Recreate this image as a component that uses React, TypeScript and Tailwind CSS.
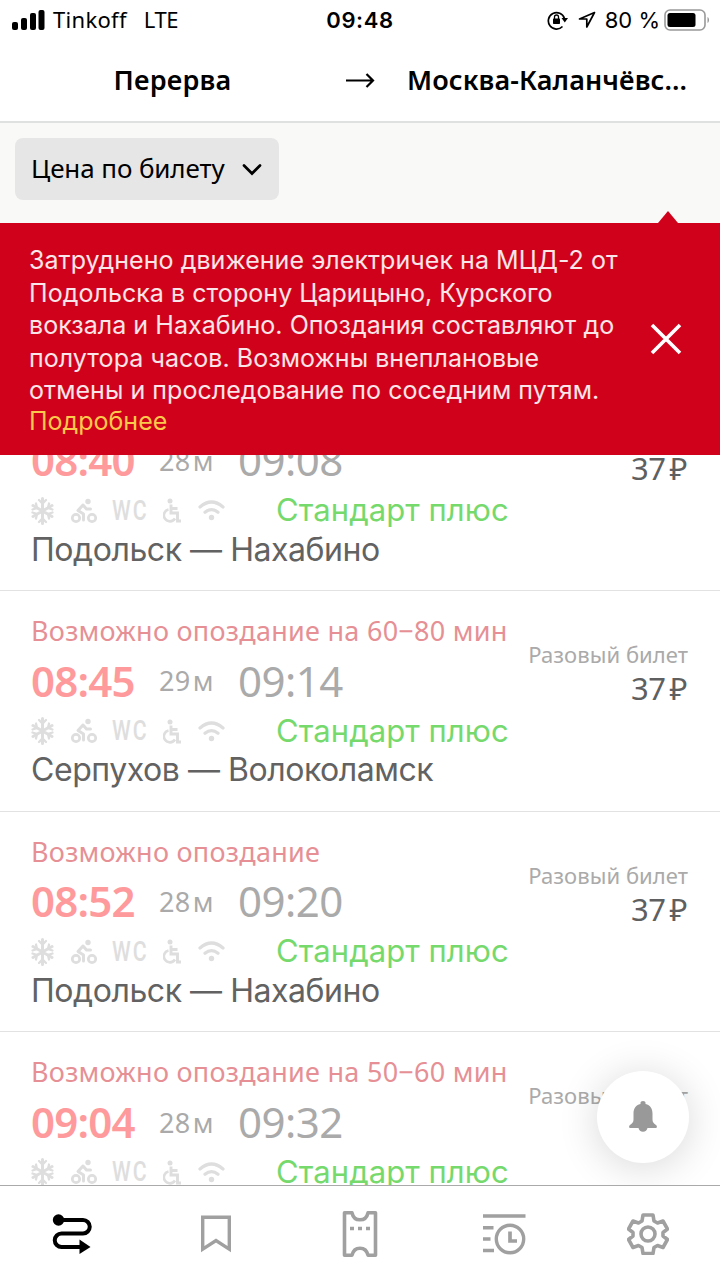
import React from "react";

interface Train {
  warning: string;
  departure: string;
  duration: string;
  arrival: string;
  route: string;
}

const trains: Train[] = [
  { warning: "Возможно опоздание", departure: "08:40", duration: "28", arrival: "09:08", route: "Подольск — Нахабино" },
  { warning: "Возможно опоздание на 60−80 мин", departure: "08:45", duration: "29", arrival: "09:14", route: "Серпухов — Волоколамск" },
  { warning: "Возможно опоздание", departure: "08:52", duration: "28", arrival: "09:20", route: "Подольск — Нахабино" },
  { warning: "Возможно опоздание на 50−60 мин", departure: "09:04", duration: "28", arrival: "09:32", route: "Подольск — Нахабино" },
];

const alertLines = [
  "Затруднено движение электричек на МЦД-2 от",
  "Подольска в сторону Царицыно, Курского",
  "вокзала и Нахабино. Опоздания составляют до",
  "полутора часов. Возможны внеплановые",
  "отмены и проследование по соседним путям.",
];

function StatusBar() {
  return (
    <div className="flex h-10 items-center px-3 font-['Inter',sans-serif] text-[22px] text-black">
      <div className="flex flex-1 items-center">
        <svg width="33" height="20" viewBox="0 0 33 20" className="mr-2">
          <rect x="0" y="12" width="6" height="8" rx="2" />
          <rect x="9" y="8" width="6" height="12" rx="2" />
          <rect x="18" y="3" width="6" height="17" rx="2" />
          <rect x="26.500" y="0" width="6" height="20" rx="2" />
        </svg>
        <span className="pb-0.5 font-['Noto_Sans',sans-serif] tracking-[0.3px]">Tinkoff</span>
        <span className="ml-[17px] pb-0.5 font-['Noto_Sans',sans-serif] tracking-[-0.4px]">LTE</span>
      </div>
      <span className="text-[22px] font-semibold tracking-[0.6px]">09:48</span>
      <div className="-mr-[3px] flex flex-1 items-center justify-end pl-[3px]">
        <svg width="22" height="20" viewBox="0 0 22 20" className="mr-[9px]">
          <path d="M15.500 16.500A8.200 8.200 0 1 1 17.400 8.500" fill="none" stroke="black" strokeWidth="1.700" />
          <path d="M14.500 8h6.500l-3.200 4.500z" />
          <rect x="6" y="8.500" width="7" height="5.500" rx="0.700" />
          <path d="M7.500 9V7a2 2 0 0 1 4 0v2" fill="none" stroke="black" strokeWidth="1.300" />
        </svg>
        <svg width="18" height="18" viewBox="0 0 18 18" className="mr-[9px]" fill="none" stroke="black" strokeWidth="1.700" strokeLinejoin="round">
          <path d="M16.500 1.500L1.500 8h7.300v8z" />
        </svg>
        <span className="font-['Inter',sans-serif]">80 %</span>
        <svg width="47" height="22" viewBox="0 0 47 22" className="ml-1">
          <rect x="1" y="1" width="40" height="20" rx="5" fill="none" stroke="#999" strokeWidth="1.600" />
          <rect x="3.500" y="4" width="28" height="14" rx="2.500" />
          <path d="M43.500 8c2 1 2 5 0 6z" fill="#999" />
        </svg>
      </div>
    </div>
  );
}

function Header() {
  return (
    <header className="flex h-[83px] items-center border-b-2 border-[#dfe1e1] font-['Noto_Sans',sans-serif] text-[27px] font-semibold text-black">
      <div className="flex w-[345px] justify-center pb-px">
        <span className="tracking-[0.2px]">Перерва</span>
      </div>
      <svg width="30" height="16" viewBox="0 0 30 16" fill="none" stroke="black" strokeWidth="2.200">
        <path d="M1 7.500h27M21.500 1l6.500 6.500-6.500 6.500" />
      </svg>
      <span className="ml-8 pb-px tracking-[0.100px]">Москва-Каланчёвс...</span>
    </header>
  );
}

function ServiceAlert() {
  return (
    <section className="relative z-10 flex h-[232px] items-center bg-[#d0021b] pl-[29px] font-['Inter',sans-serif] text-[25px] text-white/90">
      <span className="absolute -top-3 left-[658px] border-x-10 border-b-12 border-x-transparent border-b-[#d0021b]" />
      <div className="w-[621px] pt-px">
        {alertLines.map((line) => (
          <p key={line} className="h-[32.6px] leading-[32.6px] tracking-[0.050px] whitespace-nowrap">
            {line}
          </p>
        ))}
        <p className="h-7 leading-7 text-[#fbc94b]">Подробнее</p>
      </div>
      <svg width="32" height="32" viewBox="0 0 32 32" fill="none" stroke="white" strokeWidth="3.600">
        <path d="M2 2l28 28M30 2L2 30" />
      </svg>
    </section>
  );
}

function Amenities() {
  return (
    <div className="flex w-[245px] items-center text-[#dedede]">
      <svg width="23" height="28" viewBox="0 0 22 28" fill="none" stroke="currentColor" strokeWidth="3" strokeLinecap="round">
        <path d="M11 1.500v25M1.500 8.500l19 11M20.500 8.500l-19 11" />
        <path d="M7.500 3l3.500 3.500L14.500 3M7.500 25l3.500-3.500 3.500 3.500M1 12.500l4.500-1.500-1-4.500M21 15.500L16.500 17l1 4.500M1 15.500L5.500 17l-1 4.500M21 12.500L16.500 11l1-4.500" strokeWidth="2.300" />
      </svg>
      <svg width="26" height="26" viewBox="0 0 26 26" fill="none" stroke="currentColor" className="ml-[17px]">
        <circle cx="5" cy="20" r="3.700" strokeWidth="2.700" />
        <circle cx="21" cy="20" r="3.700" strokeWidth="2.700" />
        <circle cx="17" cy="3.500" r="2.700" fill="currentColor" stroke="none" />
        <path d="M19.500 11h-4l-3.500-4-5 5.500 5.500 3.500v6" strokeWidth="3" strokeLinejoin="round" strokeLinecap="round" />
      </svg>
      <span className="ml-[15px] w-[37px] font-['Roboto',sans-serif] text-[28px] leading-7 font-medium">
        <span className="inline-block origin-left scale-x-[0.76] tracking-[2.500px]">WC</span>
      </span>
      <svg width="20" height="25" viewBox="0 0 20 25" fill="none" stroke="currentColor" strokeWidth="2.900" className="ml-[14px]">
        <circle cx="7" cy="3" r="2.500" fill="currentColor" stroke="none" />
        <path d="M8 6.500v8.500h6.500v8h3.500M8 10.500h6.500" />
        <path d="M5.500 11.500a6 6 0 1 0 6.500 9" strokeWidth="2.600" />
      </svg>
      <svg width="27" height="21" viewBox="0 0 27 21" fill="none" stroke="currentColor" strokeWidth="3.200" strokeLinecap="round" className="ml-[15px]">
        <path d="M2 7q11.500-10 23 0M7 12.300q6.500-5.500 13 0" />
        <circle cx="13.500" cy="17.500" r="2.700" fill="currentColor" stroke="none" />
      </svg>
    </div>
  );
}

function TrainRow({ train }: { train: Train }) {
  return (
    <li className="flex h-[220.600px] shrink-0 justify-between border-b border-[#e2e2e2] pl-[31px] pr-8 pt-[22px] whitespace-nowrap">
      <div className="flex flex-col">
        <p className="h-9 font-['Noto_Sans',sans-serif] text-[27px] leading-9 tracking-[0.270px] text-[#e69095]">{train.warning}</p>
        <div className="flex h-16 items-center pb-0.5 font-['Noto_Sans',sans-serif] text-[#aaa]">
          <span className="w-[128px] text-[42px] font-semibold tracking-[-0.800px] text-[#ff9a9c]">{train.departure}</span>
          <span className="w-[79px] pt-[3px] text-[27px] tracking-[0.400px]">
            {train.duration}
            <span className="ml-0.5">м</span>
          </span>
          <span className="text-[42px] tracking-[-0.500px]">{train.arrival}</span>
        </div>
        <div className="flex h-9 items-center">
          <Amenities />
          <span className="font-['Inter',sans-serif] text-[31px] tracking-[0.080px] text-[#75d96c]">Стандарт плюс</span>
        </div>
        <p className="h-[42px] font-['Inter',sans-serif] text-[32px] leading-[42px] tracking-[-0.450px] text-[#626262]">{train.route}</p>
      </div>
      <div className="flex flex-col items-end pt-[25px] font-['Noto_Sans',sans-serif]">
        <span className="h-8 text-[22px] leading-8 tracking-[0.050px] text-[#aaa]">Разовый билет</span>
        <span className="flex h-9 gap-[4px] pr-0.5 text-[31px] leading-9 tracking-[-0.500px] text-[#5f5f5f]">
          37<span className="-mr-px">₽</span>
        </span>
      </div>
    </li>
  );
}

function TabBar() {
  return (
    <nav className="relative z-10 grid h-[95px] shrink-0 grid-cols-5 items-center justify-items-center border-t border-[#aaa] bg-white pt-0.5 text-[#a0a0a0]">
      <svg width="40" height="40" viewBox="0 0 40 40" fill="none" stroke="black" strokeWidth="4">
        <circle cx="6.500" cy="6" r="5.700" fill="black" stroke="none" />
        <path d="M6 6h25a6.700 6.700 0 0 1 0 13.500H9.500a6.700 6.700 0 0 0 0 13.500h19" />
        <path d="M27.500 25.500l11 7.500-11 7z" fill="black" stroke="none" />
      </svg>
      <svg width="32" height="38" viewBox="0 0 32 38" fill="none" stroke="currentColor" strokeWidth="3.400">
        <path d="M2.700 2.200h26.600v32L16 25.500 2.700 34.200z" />
      </svg>
      <svg width="36" height="46" viewBox="0 0 36 46" fill="none" stroke="currentColor" strokeWidth="3.600" strokeLinejoin="round">
        <path d="M2.500 1.800h7.500c1 4.500 4 7 8 7s7-2.500 8-7h7.500v42.400H26c-1-4.500-4-7-8-7s-7 2.500-8 7H2.500z" />
        <path d="M8 17.500h4M16 17.500h4M24 17.500h4" strokeWidth="3.700" />
      </svg>
      <svg width="43" height="41" viewBox="0 0 43 41" fill="none" stroke="currentColor" strokeWidth="3.400">
        <path d="M0 2h42.500M0 13.700h10.500M0 25h7.500M0 36.500h11" />
        <circle cx="27" cy="25" r="13.700" />
        <path d="M27 17.500v9.500h7" strokeWidth="3.700" />
      </svg>
      <svg width="42" height="42" viewBox="0 0 42 42" fill="none" stroke="currentColor" strokeWidth="3.600" strokeLinejoin="round" className="mr-px">
        <path d="M16 2h10l1 6 3.500 2 5.500-2 4.500 8-4.500 3.500v3.500l4.500 3.500-4.500 8-5.500-2-3.500 2-1 6H16l-1-6-3.500-2-5.500 2-4.500-8L6 23v-3.500L1.500 16 6 8l5.500 2L15 8z" />
        <circle cx="21" cy="21" r="7" />
      </svg>
    </nav>
  );
}

export default function App() {
  return (
    <div className="relative flex h-[1280px] w-[720px] flex-col overflow-hidden bg-white">
      <StatusBar />
      <Header />
      <div className="flex h-[100px] shrink-0 items-start bg-[#f9f9f8] pl-[15px] pt-[15px]">
        <button className="flex h-[62px] w-[264px] items-center justify-between rounded-lg bg-[#e6e6e6] px-4 font-['Noto_Sans',sans-serif] text-[26px] text-black">
          <span className="pb-px tracking-[-0.100px] whitespace-nowrap">Цена по билету</span>
          <svg width="22" height="14" viewBox="0 0 22 14" fill="none" stroke="black" strokeWidth="2.700" strokeLinecap="round">
            <path d="M3 3.500l8 8 8-8" />
          </svg>
        </button>
      </div>
      <ServiceAlert />
      <ul className="-mt-[84.500px] flex min-h-0 flex-1 flex-col overflow-hidden">
        {trains.map((train) => (
          <TrainRow key={train.departure} train={train} />
        ))}
      </ul>
      <button className="absolute left-[597px] top-[1071px] flex size-[92px] items-center justify-center rounded-full bg-white shadow-[0_4px_40px_rgba(0,0,0,0.16)]">
        <svg width="28" height="32" viewBox="0 0 28 32" fill="#999">
          <path d="M11.500 3V1.500Q11.500 0 14 0t2.500 1.500V3c5 1.200 7 5 7 9.500v6c0 2.500 1 3.500 3.500 5.500 1.500 1.300 1 3-.5 3h-8a4.600 4.600 0 0 1-9 0h-8c-1.500 0-2-1.700-.5-3 2.500-2 3.500-3 3.500-5.500v-6c0-4.500 2-8.300 7-9.500z" />
        </svg>
      </button>
      <TabBar />
    </div>
  );
}
